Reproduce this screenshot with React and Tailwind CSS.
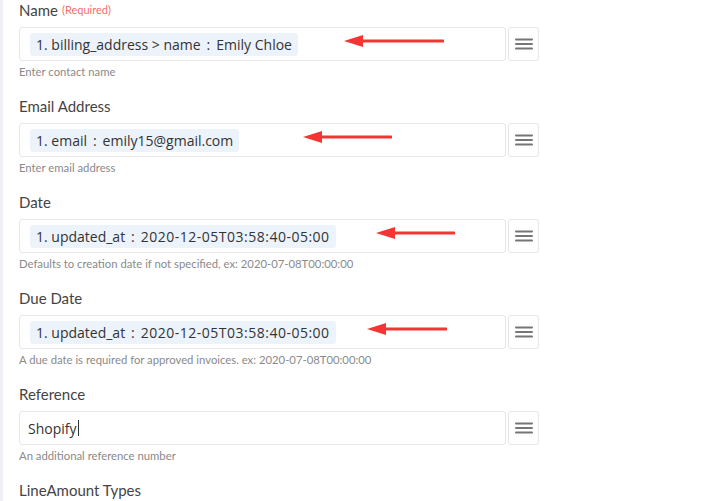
import React from "react";

// Field data
const fields = [
  { label: "Name", required: true, chip: ["1. billing_address > name", "Emily Chloe"], help: "Enter contact name", arrow: { left: 324, width: 100 } },
  { label: "Email Address", chip: ["1. email", "emily15@gmail.com"], help: "Enter email address", arrow: { left: 283, width: 89 } },
  { label: "Date", chip: ["1. updated_at", "2020-12-05T03:58:40-05:00"], stamp: true, help: "Defaults to creation date if not specified, ex: 2020-07-08T00:00:00", arrow: { left: 356, width: 79 } },
  { label: "Due Date", chip: ["1. updated_at", "2020-12-05T03:58:40-05:00"], stamp: true, help: "A due date is required for approved invoices. ex: 2020-07-08T00:00:00", arrow: { left: 347, width: 80 } },
  { label: "Reference", text: "Shopify", help: "An additional reference number" },
];

function Arrow({ left, width }) {
  return (
    <svg className="absolute top-[5px] pointer-events-none" style={{ left: left, width: width }} height="16" viewBox={`0 0 ${width} 16`}>
      <line x1="16" y1="8" x2={width - 1} y2="8" stroke="#f23535" strokeWidth="3" strokeLinecap="round" />
      <polygon points="0,8 19,2 19,14" fill="#f23535" />
    </svg>
  );
}

function MenuButton() {
  return (
    <button className="w-[31px] h-[34px] ml-[2px] shrink-0 flex items-center justify-center bg-white border border-[#e4e6ea] rounded-[3px]">
      <svg width="18" height="12" viewBox="0 0 18 12">
        <rect x="0" y="0.5" width="18" height="2" rx="1" fill="#767676" />
        <rect x="0" y="5" width="18" height="2" rx="1" fill="#767676" />
        <rect x="0" y="9.5" width="18" height="2" rx="1" fill="#767676" />
      </svg>
    </button>
  );
}

function Field({ field }) {
  return (
    <div className="h-[96px]">
      <div className="h-[22px] pb-[2px] flex items-center gap-[4px] text-[15px] text-[#444]" style={{ fontFamily: "Lato, 'Open Sans', sans-serif" }}>
        <span>{field.label}</span>
        {field.required && <span className="text-[11px] text-[#f07070] mt-[1px]">(Required)</span>}
      </div>
      <div className="relative flex mt-[5px] w-[520px]">
        <div className="relative flex-1 h-[34px] border border-[#e4e6ea] rounded-[3px] bg-white flex items-center px-[10px]" style={{ fontFamily: "'Open Sans', sans-serif" }}>
          {field.chip && (
            <span className="h-[23px] flex items-center px-[6px] rounded-[3px] bg-[#edf3fb] text-[14px] text-[#333] whitespace-pre">
              {field.chip[0]}
              {" \u2009:\u2009 "}
              <span className={field.stamp ? "tracking-[0.5px]" : ""}>{field.chip[1]}</span>
            </span>
          )}
          {field.text && (
            <span className="text-[14px] text-[#333] -ml-[2px] flex items-center">
              {field.text}
              <span className="inline-block w-[1px] h-[16px] bg-[#333] ml-[1px]" />
            </span>
          )}
          {field.arrow && <Arrow left={field.arrow.left} width={field.arrow.width} />}
        </div>
        <MenuButton />
      </div>
      <div className="mt-[3px] h-[16px] flex items-center text-[11.3px] text-[#8a8a8a]" style={{ fontFamily: "Lato, 'Open Sans', sans-serif" }}>
        {field.help}
      </div>
    </div>
  );
}

export default function App() {
  return (
    <div className="w-[726px] h-[501px] overflow-hidden bg-white flex">
      <div className="w-[3px] bg-[#eef0f3] shrink-0" />
      <div className="pl-[16px]">
        {fields.map((f) => (
          <Field key={f.label + f.help} field={f} />
        ))}
        <div className="h-[22px] pb-[2px] flex items-center text-[15px] text-[#444]" style={{ fontFamily: "Lato, 'Open Sans', sans-serif" }}>
          LineAmount Types
        </div>
      </div>
    </div>
  );
}
